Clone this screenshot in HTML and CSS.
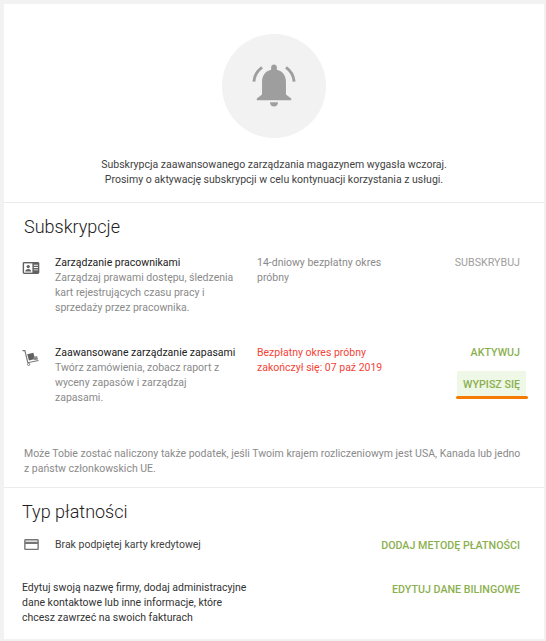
FILE: index.html
```html
<!DOCTYPE html>
<html lang="pl">
  <head>
    <meta charset="UTF-8" />
    <title>Subskrypcje</title>
    <link rel="stylesheet" href="styles.css">
  </head>

  <body>
    <div class="card">
      <div class="notice">
        <div class="bell-circle">
          <svg class="bell" viewBox="0 0 46 46" width="44" height="44">
            <path fill="#9e9e9e" d="M23 .5c-1.700 0-3 1.300-3 3v2.400C13.800 7.300 10.500 12.300 10.500 18.500V32L5 36v2h36v-2l-5.500-4V18.500c0-6.200-3.300-11.200-9.500-12.600V3.500c0-1.700-1.300-3-3-3z"/>
            <path fill="#9e9e9e" d="M18.800 40h8.400c0 2.800-1.800 4.500-4.200 4.500s-4.200-1.700-4.200-4.500z"/>
            <path fill="none" stroke="#9e9e9e" stroke-width="3" d="M2 18.500C2.400 12.500 5.500 7 10.500 3.500"/>
            <path fill="none" stroke="#9e9e9e" stroke-width="3" d="M44 18.500C43.600 12.500 40.500 7 35.500 3.500"/>
          </svg>
        </div>
        <p class="notice-text">Subskrypcja zaawansowanego zarządzania magazynem wygasła wczoraj.<br>Prosimy o aktywację subskrypcji w celu kontynuacji korzystania z usługi.</p>
      </div>

      <div class="subs">
        <h2 class="subs-title">Subskrypcje</h2>

        <div class="sub-row">
          <svg class="sub-icon sub-icon-id" viewBox="0 0 18 13" width="18" height="12">
            <path fill="#616161" d="M0 1.500C0 .7.700 0 1.500 0h15c.8 0 1.500.7 1.500 1.500v10c0 .8-.7 1.500-1.500 1.500h-15C.7 13 0 12.300 0 11.500z"/>
            <path fill="#fff" d="M1.500 1.500h9v10h-9z"/>
            <circle fill="#616161" cx="6" cy="5" r="1.800"/>
            <path fill="#616161" d="M2.800 10.200c0-1.700 1.500-2.700 3.200-2.700s3.200 1 3.200 2.700z"/>
            <path fill="#fff" d="M12 3h4.500v1H12zM12 5.500h4.500v1H12zM12 8h4.500v1H12z"/>
          </svg>
          <div class="sub-text">
            <div class="sub-name">Zarządzanie pracownikami</div>
            <div class="sub-desc">Zarządzaj prawami dostępu, śledzenia kart rejestrujących czasu pracy i sprzedaży przez pracownika.</div>
          </div>
          <div class="sub-status">14-dniowy bezpłatny okres próbny</div>
          <div class="sub-actions">
            <a class="action action-grey">SUBSKRYBUJ</a>
          </div>
        </div>

        <div class="sub-row">
          <svg class="sub-icon sub-icon-cart" viewBox="0 0 18 17" width="18" height="16">
            <path fill="none" stroke="#757575" stroke-width="1.200" d="M0 .6h2.500L5.600 13.500l11.400-2.300"/>
            <path fill="#616161" d="M5 4.500l6.500-1.700 1.800 6.700-6.500 1.700z"/>
            <path fill="#8a8a8a" d="M11.500 7.500l4-1 1 3.500-4 1z"/>
            <circle fill="none" stroke="#757575" cx="6.500" cy="15.300" r="1.200"/>
          </svg>
          <div class="sub-text">
            <div class="sub-name">Zaawansowane zarządzanie zapasami</div>
            <div class="sub-desc">Twórz zamówienia, zobacz raport z wyceny zapasów i zarządzaj zapasami.</div>
          </div>
          <div class="sub-status sub-status-expired">Bezpłatny okres próbny zakończył się: 07 paź 2019</div>
          <div class="sub-actions">
            <a class="action">AKTYWUJ</a>
            <a class="action action-highlight">WYPISZ SIĘ</a>
          </div>
        </div>

        <p class="tax-note">Może Tobie zostać naliczony także podatek, jeśli Twoim krajem rozliczeniowym jest USA, Kanada lub jedno z państw członkowskich UE.</p>
      </div>

      <div class="payment">
        <h2 class="payment-title">Typ płatności</h2>
        <div class="payment-row">
          <svg class="card-icon" viewBox="0 0 16 12" width="15" height="11">
            <path fill="#757575" d="M1.500 0h13C15.300 0 16 .7 16 1.500v9c0 .8-.7 1.500-1.500 1.500h-13C.7 12 0 11.300 0 10.500v-9C0 .7.700 0 1.500 0zm0 1.500V3h13V1.500zm0 4v5h13v-5z"/>
          </svg>
          <span class="payment-label">Brak podpiętej karty kredytowej</span>
          <a class="action">DODAJ METODĘ PŁATNOŚCI</a>
        </div>
        <div class="billing-row">
          <p class="billing-text">Edytuj swoją nazwę firmy, dodaj administracyjne dane kontaktowe lub inne informacje, które chcesz zawrzeć na swoich fakturach</p>
          <a class="action">EDYTUJ DANE BILINGOWE</a>
        </div>
      </div>
    </div>
  </body>
</html>
```

FILE: styles.css
```css
* {
  box-sizing: border-box;
}

body {
  margin: 0;
  height: 641px;
  overflow: hidden;
  padding: 4px 2px 2px 4px;
  background-color: #f2f2f2;
  font-family: Roboto, sans-serif;
  font-size: 10.500px;
  line-height: 15px;
  color: #424242;
}

p,
h2 {
  margin: 0;
}

.card {
  background-color: #fff;
  height: 635px;
}

.notice {
  height: 199px;
  padding-top: 30px;
  border-bottom: 1px solid #ebebeb;
  text-align: center;
}

.bell-circle {
  width: 104px;
  height: 104px;
  margin: 0 auto;
  border-radius: 50%;
  background-color: #f2f2f2;
  display: flex;
  justify-content: center;
  align-items: center;
}

.notice-text {
  margin-top: 19px;
  font-size: 10.520px;
  color: #424242;
}

.subs {
  height: 285px;
  padding: 13px 24px 0 20px;
  border-bottom: 1px solid #ebebeb;
}

.subs-title {
  font-size: 18px;
  font-weight: 300;
  line-height: 21px;
  color: #212121;
}

.sub-row {
  display: flex;
  align-items: flex-start;
  margin-top: 18px;
  height: 73px;
}

.sub-row + .sub-row {
  margin-top: 17px;
}

.sub-icon {
  flex: none;
  margin: 0 15px 0 -2px;
}

.sub-icon-id {
  margin-top: 7px;
}

.sub-icon-cart {
  margin-top: 5px;
}

.sub-text {
  width: 202px;
  flex: none;
  padding-right: 22px;
}

.sub-name {
  color: #212121;
  white-space: nowrap;
}

.sub-desc {
  color: #8a8a8a;
}

.sub-status {
  width: 135px;
  flex: none;
  color: #8a8a8a;
}

.sub-status-expired {
  color: #f44336;
}

.sub-actions {
  flex: 1;
  display: flex;
  flex-direction: column;
  align-items: flex-end;
}

.action {
  font-size: 10.700px;
  font-weight: 500;
  line-height: 15px;
  color: #8bb04f;
  white-space: nowrap;
}

.action-grey {
  font-weight: 400;
  color: #9e9e9e;
}

.action-highlight {
  position: relative;
  margin: 11px -6px 0 0;
  padding: 6px 6px 5px;
  background-color: #eff7e7;
}

.action-highlight::after {
  content: "";
  position: absolute;
  left: -1px;
  right: -2px;
  bottom: -2px;
  height: 3px;
  border-radius: 2px;
  background-color: #f57c00;
}

.tax-note {
  margin: 28px -4px 0 0;
  color: #8a8a8a;
}

.payment {
  padding: 13px 24px 0 18px;
}

.payment-title {
  font-size: 18px;
  font-weight: 300;
  line-height: 21px;
  color: #212121;
}

.payment-row {
  display: flex;
  align-items: center;
  margin-top: 14px;
}

.payment-row .action,
.billing-row .action {
  margin-top: 2px;
}

.card-icon {
  flex: none;
  margin: 0 16px 0 2px;
}

.payment-label {
  flex: 1;
  color: #424242;
}

.billing-row {
  display: flex;
  justify-content: space-between;
  align-items: flex-start;
  margin-top: 27px;
}

.billing-text {
  width: 232px;
  color: #333;
}
```
